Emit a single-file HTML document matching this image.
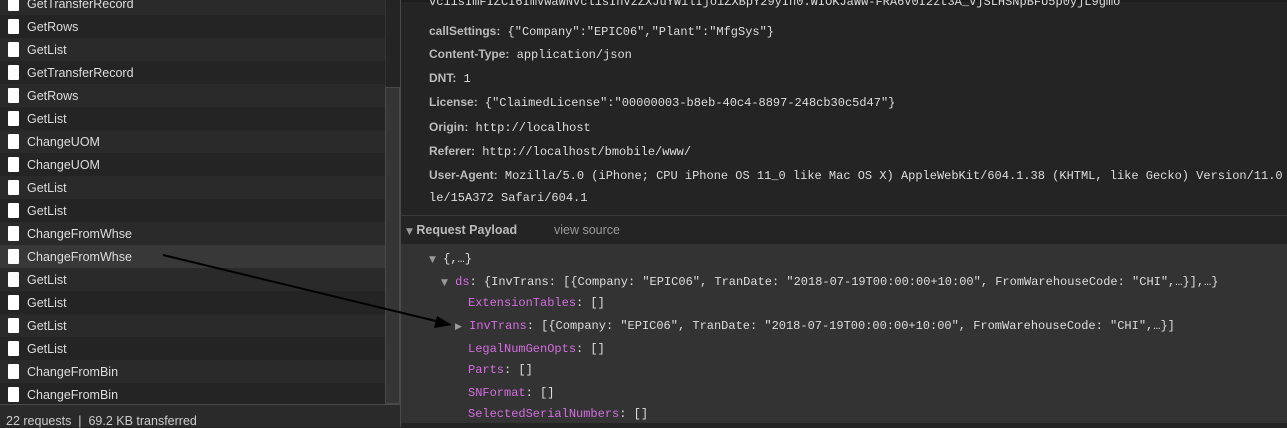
<!DOCTYPE html>
<html><head><meta charset="utf-8"><style>
*{margin:0;padding:0;box-sizing:border-box}
body{width:1287px;height:427px;overflow:hidden;background:#242424;position:relative;font-family:"Liberation Sans",sans-serif}
.r{position:absolute;left:0;width:385px;height:23px}
.r i{position:absolute;left:8px;top:4px;width:11px;height:15px;background:#fff;border-radius:1px}
.r span{position:absolute;left:27px;top:5px;font-size:12.5px;color:#ddd}
.m{font-family:"Liberation Mono",monospace;font-size:12px;white-space:pre}
.h{position:absolute;left:429px;color:#ddd;white-space:pre}
.h b{font-family:"Liberation Sans",sans-serif;font-size:12px;color:#bbb;font-weight:bold}
.t{position:absolute;color:#ddd}
.k{color:#d46ee0}
.tri{color:#999;font-size:9px;font-family:"DejaVu Sans",sans-serif}
</style></head><body>
<div style="position:absolute;left:0;top:0;width:385px;height:404px;background:#242424;overflow:hidden">
<div class="r" style="top:-8px;background:#2a2a2a"><i></i><span>GetTransferRecord</span></div>
<div class="r" style="top:15px;background:#242424"><i></i><span>GetRows</span></div>
<div class="r" style="top:38px;background:#2a2a2a"><i></i><span>GetList</span></div>
<div class="r" style="top:61px;background:#242424"><i></i><span>GetTransferRecord</span></div>
<div class="r" style="top:84px;background:#2a2a2a"><i></i><span>GetRows</span></div>
<div class="r" style="top:107px;background:#242424"><i></i><span>GetList</span></div>
<div class="r" style="top:130px;background:#2a2a2a"><i></i><span>ChangeUOM</span></div>
<div class="r" style="top:153px;background:#242424"><i></i><span>ChangeUOM</span></div>
<div class="r" style="top:176px;background:#2a2a2a"><i></i><span>GetList</span></div>
<div class="r" style="top:199px;background:#242424"><i></i><span>GetList</span></div>
<div class="r" style="top:222px;background:#2a2a2a"><i></i><span>ChangeFromWhse</span></div>
<div class="r" style="top:245px;background:#383838"><i></i><span>ChangeFromWhse</span></div>
<div class="r" style="top:268px;background:#2a2a2a"><i></i><span>GetList</span></div>
<div class="r" style="top:291px;background:#242424"><i></i><span>GetList</span></div>
<div class="r" style="top:314px;background:#2a2a2a"><i></i><span>GetList</span></div>
<div class="r" style="top:337px;background:#242424"><i></i><span>GetList</span></div>
<div class="r" style="top:360px;background:#2a2a2a"><i></i><span>ChangeFromBin</span></div>
<div class="r" style="top:383px;background:#242424"><i></i><span>ChangeFromBin</span></div>
</div>
<div style="position:absolute;left:385px;top:0;width:15px;height:404px;background:#242424;border-left:1px solid #333"></div>
<div style="position:absolute;left:385px;top:87px;width:15px;height:317px;background:#353535;border:1px solid #4a4a4a"></div>
<div style="position:absolute;left:0;top:404px;width:400px;height:1px;background:#4a4a4a"></div>
<div style="position:absolute;left:0;top:405px;width:400px;height:22px;background:#2a2a2a"></div>
<div style="position:absolute;left:6px;top:414px;font-size:12.5px;color:#ccc">22 requests &nbsp;|&nbsp; 69.2 KB transferred</div>
<div style="position:absolute;left:400px;top:0;width:1px;height:427px;background:#4a4a4a"></div>

<div style="position:absolute;left:401px;top:0;width:886px;height:2px;background:#1c1c1c"></div>
<div class="h m" style="top:-5px">vc1isImFIZCI6ImVwaWNvcl1sInVzZXJuYW1lIjoiZXBpY29yIn0.WIOKJaWw-FRA6V0I2zt3A_VjSLHSNpBFU5p0yjL9gmo</div>
<div class="h m" style="top:24px"><b>callSettings:</b> {"Company":"EPIC06","Plant":"MfgSys"}</div>
<div class="h m" style="top:47px"><b>Content-Type:</b> application/json</div>
<div class="h m" style="top:71px"><b>DNT:</b> 1</div>
<div class="h m" style="top:95px"><b>License:</b> {"ClaimedLicense":"00000003-b8eb-40c4-8897-248cb30c5d47"}</div>
<div class="h m" style="top:120px"><b>Origin:</b> http://localhost</div>
<div class="h m" style="top:144px"><b>Referer:</b> http://localhost/bmobile/www/</div>
<div class="h m" style="top:168px"><b>User-Agent:</b> Mozilla/5.0 (iPhone; CPU iPhone OS 11_0 like Mac OS X) AppleWebKit/604.1.38 (KHTML, like Gecko) Version/11.0 Mobi</div>
<div class="h m" style="top:191px">le/15A372 Safari/604.1</div>

<div style="position:absolute;left:401px;top:215px;width:886px;height:1px;background:#3a3a3a"></div>
<div style="position:absolute;left:406px;top:223px;font-size:12.5px;color:#bbb;font-weight:bold"><span class="tri">▼</span> Request Payload</div>
<div style="position:absolute;left:554px;top:223px;font-size:12.5px;color:#999">view source</div>
<div style="position:absolute;left:401px;top:244px;width:886px;height:179px;background:#333"></div>
<div class="t m" style="left:429px;top:252px"><span class="tri">▼</span> {,…}</div>
<div class="t m" style="left:441px;top:275px"><span class="tri">▼</span> <span class="k">ds</span>: {InvTrans: [{Company: "EPIC06", TranDate: "2018-07-19T00:00:00+10:00", FromWarehouseCode: "CHI",…}],…}</div>
<div class="t m" style="left:468px;top:296px"><span class="k">ExtensionTables</span>: []</div>
<div class="t m" style="left:455px;top:319px"><span class="tri">▶</span> <span class="k">InvTrans</span>: [{Company: "EPIC06", TranDate: "2018-07-19T00:00:00+10:00", FromWarehouseCode: "CHI",…}]</div>
<div class="t m" style="left:468px;top:342px"><span class="k">LegalNumGenOpts</span>: []</div>
<div class="t m" style="left:468px;top:363px"><span class="k">Parts</span>: []</div>
<div class="t m" style="left:468px;top:386px"><span class="k">SNFormat</span>: []</div>
<div class="t m" style="left:468px;top:407px"><span class="k">SelectedSerialNumbers</span>: []</div>

<svg style="position:absolute;left:0;top:0" width="1287" height="427">
<line x1="163" y1="255" x2="440" y2="322" stroke="#000" stroke-width="2"/>
<polygon points="452,325 437,316 434,328" fill="#000"/>
</svg>
</body></html>
